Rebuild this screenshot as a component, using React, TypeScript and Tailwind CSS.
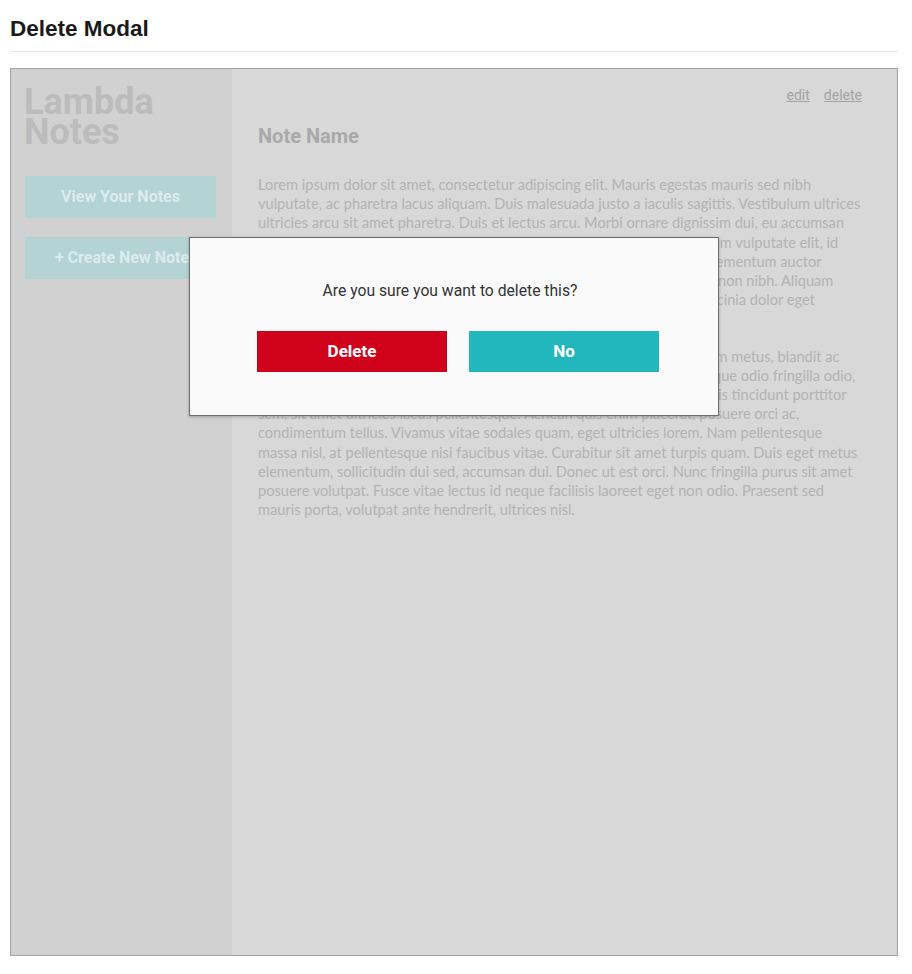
import React from "react";

const PARA_ONE = [
  "Lorem ipsum dolor sit amet, consectetur adipiscing elit. Mauris egestas mauris sed nibh",
  "vulputate, ac pharetra lacus aliquam. Duis malesuada justo a iaculis sagittis. Vestibulum ultrices",
  "ultricies arcu sit amet pharetra. Duis et lectus arcu. Morbi ornare dignissim dui, eu accumsan",
  "nisl porttitor vel. Suspendisse potenti. Nullam eget ligula et nunc sem diam vulputate elit, id",
  "sagittis nibh. Integer consequat lorem in ligula dignissim, vitae risus ac elementum auctor",
  "risus. Fusce vehicula imperdiet sem, in dapibus lectus sed ante tincidunt non nibh. Aliquam",
  "erat volutpat. Sed faucibus tortor ut ultrices consequat. Donec in nibh lacinia dolor eget",
  "tempor pretium.",
];

const PARA_TWO = [
  "Suspendisse potenti. Mauris vel lectus nec ipsum a tellus rutrum interdum metus, blandit ac",
  "tellus. Nunc iaculis vel neque a laoreet. Praesent sit dolor non cursus neque odio fringilla odio,",
  "vitae hendrerit nunc fermentum non. Sed auctor in sodales a nisi et mattis tincidunt porttitor",
  "sem, sit amet ultricies lacus pellentesque. Aenean quis enim placerat, posuere orci ac,",
  "condimentum tellus. Vivamus vitae sodales quam, eget ultricies lorem. Nam pellentesque",
  "massa nisl, at pellentesque nisi faucibus vitae. Curabitur sit amet turpis quam. Duis eget metus",
  "elementum, sollicitudin dui sed, accumsan dui. Donec ut est orci. Nunc fringilla purus sit amet",
  "posuere volutpat. Fusce vitae lectus id neque facilisis laoreet eget non odio. Praesent sed",
  "mauris porta, volutpat ante hendrerit, ultrices nisl.",
];

function Lines({ lines, className }: { lines: string[]; className?: string }) {
  return (
    <p className={className}>
      {lines.map((l, i) => (
        <span key={i} className="block whitespace-nowrap">
          {l}
        </span>
      ))}
    </p>
  );
}

function Sidebar() {
  return (
    <aside className="w-[221px] shrink-0 bg-[#d1d1d1] px-[14px] pt-[18px]">
      <h1 className="-ml-[1px] font-['Roboto',sans-serif] text-[36px] font-bold leading-[30px] text-[#bcbcbc]">
        Lambda
        <br />
        Notes
      </h1>
      <div className="mt-[29px] flex flex-col gap-[19px]">
        <button className="h-[42px] w-[191px] bg-[#b3d3d5] font-['Roboto',sans-serif] text-[16px] font-bold text-[#dcebec]">
          View Your Notes
        </button>
        <button className="h-[42px] w-[191px] bg-[#b3d3d5] pl-[3px] font-['Roboto',sans-serif] text-[16px] font-bold text-[#dcebec] whitespace-nowrap">
          + Create New Note
        </button>
      </div>
    </aside>
  );
}

function NoteView() {
  return (
    <main className="flex-1 overflow-hidden bg-[#d8d8d8] pl-[26px] pr-[35px] pt-[16px]">
      <div className="flex justify-end gap-[14px] font-['Roboto',sans-serif] text-[14px] leading-[20px] text-[#a3a3a3]">
        <a className="underline">edit</a>
        <a className="underline">delete</a>
      </div>
      <h2 className="mt-[17px] font-['Roboto',sans-serif] text-[20px] font-bold leading-[28px] text-[#a9a9a9]">
        Note Name
      </h2>
      <div className="mt-[25px] font-['Lato',sans-serif] text-[14.6px] leading-[19.2px] text-[#b3b3b3]">
        <Lines lines={PARA_ONE} className="mb-[18px]" />
        <Lines lines={PARA_TWO} />
      </div>
    </main>
  );
}

function DeleteModal() {
  return (
    <div className="absolute left-[178px] top-[168px] h-[179px] w-[530px] border border-[#6e6e6e] bg-[#fafafa] shadow-[0_1px_3px_rgba(0,0,0,0.25)]">
      <p className="pr-[8px] pt-[42px] text-center font-['Roboto',sans-serif] text-[15.7px] leading-[22px] text-[#333333]">
        Are you sure you want to delete this?
      </p>
      <div className="mt-[29px] flex gap-[22px] pl-[67px]">
        <button className="h-[41px] w-[190px] bg-[#d0021b] font-['Roboto',sans-serif] text-[17px] font-bold text-white">
          Delete
        </button>
        <button className="h-[41px] w-[190px] bg-[#22b7bd] font-['Roboto',sans-serif] text-[17px] font-bold text-white">
          No
        </button>
      </div>
    </div>
  );
}

export default function App() {
  return (
    <div className="min-h-screen bg-white pb-[18px] pl-[10px] pr-[14px]">
      <h2 className="border-b border-[#e6e6e6] pb-[8px] pt-[15px] font-['Liberation_Sans',sans-serif] text-[22.5px] font-bold leading-[28px] text-[#1a1a1a]">
        Delete Modal
      </h2>
      <div className="relative mt-[16px] flex h-[888px] border border-[#a3a3a3]">
        <Sidebar />
        <NoteView />
        <DeleteModal />
      </div>
    </div>
  );
}
